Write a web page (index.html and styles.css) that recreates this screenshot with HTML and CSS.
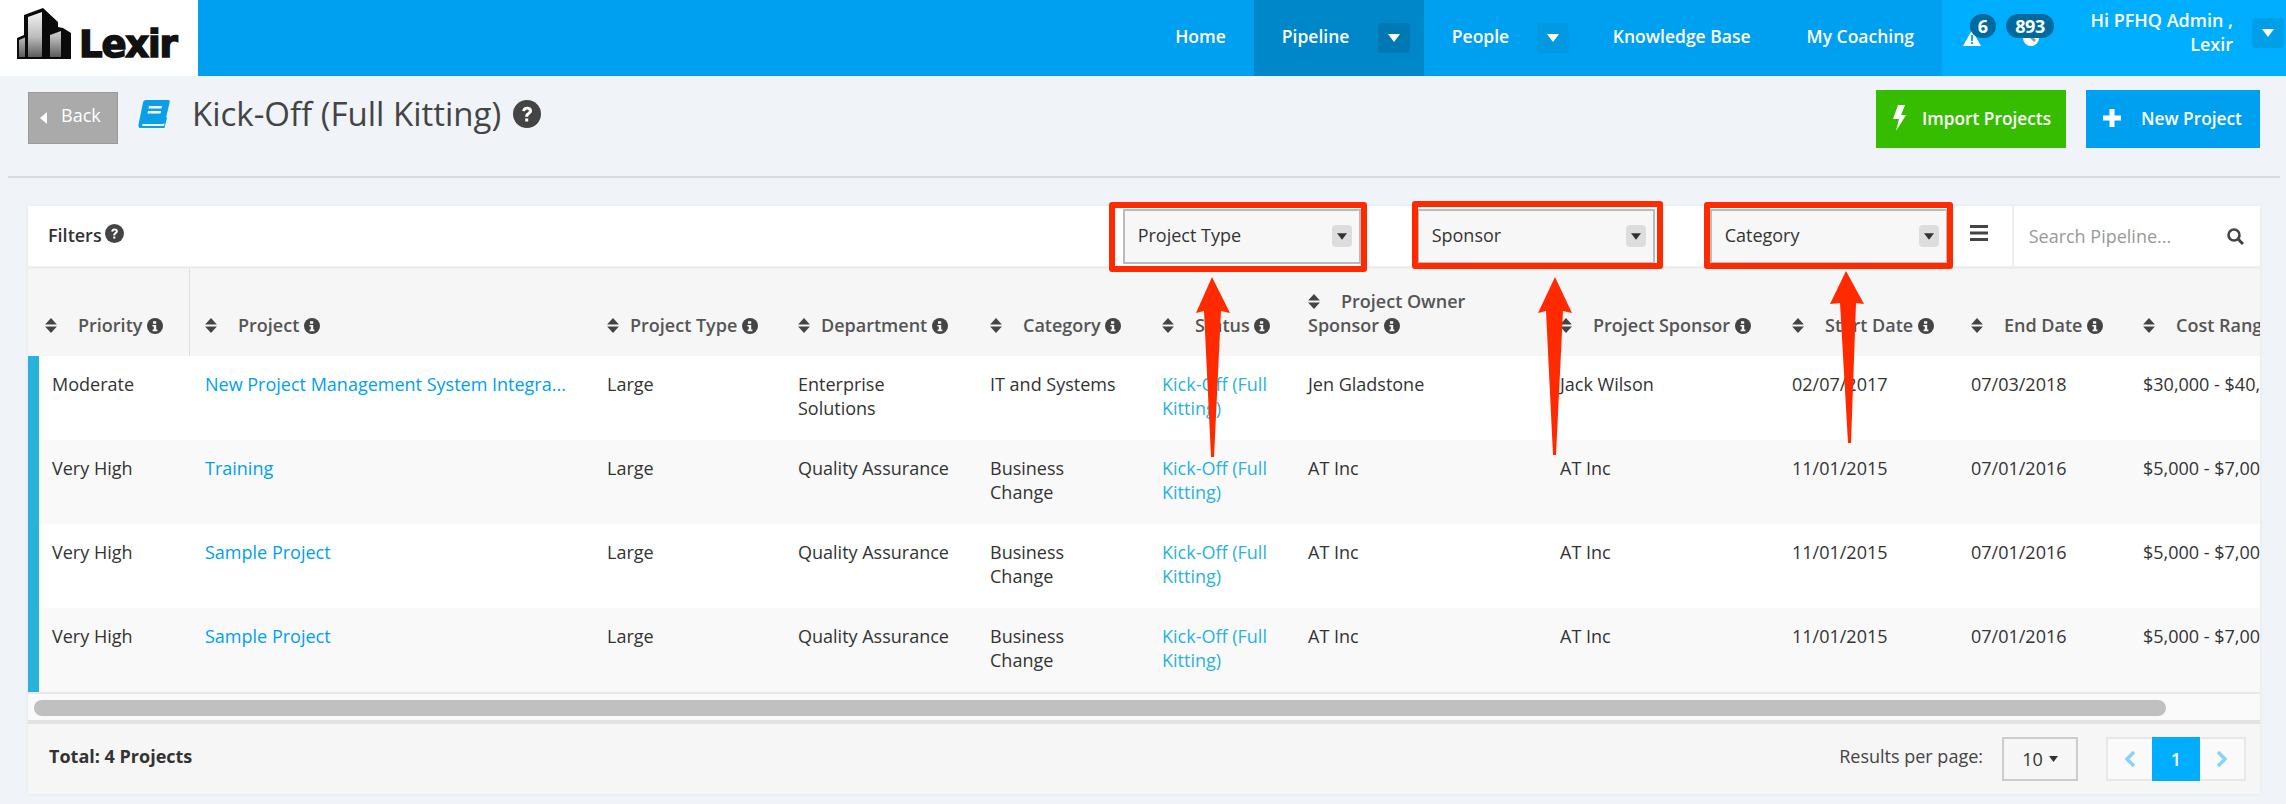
FILE: index.html
```html
<!DOCTYPE html>
<html lang="en">
<head>
<meta charset="utf-8">
<title>Kick-Off (Full Kitting)</title>
<link rel="stylesheet" href="styles.css">
</head>
<body>
<svg class="defs" width="0" height="0" aria-hidden="true">
  <symbol id="i-info" viewBox="0 0 16 16"><circle cx="8" cy="8" r="8" fill="currentColor"/><path d="M6 3.200h3.200v2.600H6zM5.400 7h3.800v4.600h1.200v1.600H5.600v-1.600h1.200V8.600H5.400z" fill="#f6f6f6"/></symbol>
  <symbol id="i-help" viewBox="0 0 28 28"><circle cx="14" cy="14" r="14" fill="currentColor"/><path d="M9.200 11c.2-2.800 2.300-4.300 5-4.300 2.800 0 4.800 1.600 4.800 4 0 3.400-3.800 3.400-3.800 6.100h-3c-.1-4 3.700-4 3.700-6 0-.8-.7-1.400-1.800-1.400-1.200 0-1.900.7-2.100 1.900z" fill="#fff"/><rect x="12.200" y="18.500" width="3" height="3" fill="#fff"/></symbol>
  <symbol id="i-sort" viewBox="0 0 11 14"><path d="M5.500 0l5.500 6H0zM5.500 14L0 8h11z" fill="currentColor"/></symbol>
  <symbol id="i-down" viewBox="0 0 12 8"><path d="M0 0h12L6 8z" fill="currentColor"/></symbol>
</svg>

<nav class="topbar">
  <a class="logo">
    <svg class="logo-mark" viewBox="0 0 60 56" width="60" height="56" aria-hidden="true">
      <defs><linearGradient id="glass" x1="0" y1="0" x2="0" y2="1"><stop offset="0" stop-color="#f2f2f2"/><stop offset=".55" stop-color="#bdbdbd"/><stop offset="1" stop-color="#5c5c5c"/></linearGradient></defs>
      <path d="M1 54V33l7-3V10L27 3l15 14v5l5 1 8 5v26z" fill="#0a0a0a"/>
      <path d="M3 52V35l6-2.500V52zM12 52V12l14-5v45zM34 52V30l11-4v26z" fill="url(#glass)"/>
    </svg>
    <span class="logo-word">Lexir</span>
  </a>
  <div class="nav-main">
    <a class="nav-item">Home</a>
    <a class="nav-item nav-item--active">Pipeline<span class="nav-caret nav-caret--dark"><svg width="12" height="8"><use href="#i-down"/></svg></span></a>
    <a class="nav-item nav-item--people">People<span class="nav-caret"><svg width="12" height="8"><use href="#i-down"/></svg></span></a>
    <a class="nav-item">Knowledge Base</a>
    <a class="nav-item">My Coaching</a>
  </div>
  <div class="nav-user">
    <span class="alert alert--warn">
      <svg width="18" height="16" viewBox="0 0 18 16" aria-hidden="true"><path d="M9 0l9 16H0z" fill="#fff"/><path d="M8 5h2v6H8zM8 12h2v2H8z" fill="#00aeff"/></svg>
      <b class="badge badge--one">6</b>
    </span>
    <span class="alert alert--count">
      <svg width="16" height="16" viewBox="0 0 16 16" aria-hidden="true"><circle cx="8" cy="8" r="8" fill="#fff"/><path d="M3 2l9 9" stroke="#999" stroke-width="3"/></svg>
      <b class="badge badge--many">893</b>
    </span>
    <span class="user-name">Hi PFHQ Admin ,<br>Lexir</span>
    <span class="nav-caret nav-caret--user"><svg width="12" height="8"><use href="#i-down"/></svg></span>
  </div>
</nav>

<main class="page">
  <header class="page-head">
    <a class="btn-back"><svg width="7" height="12" viewBox="0 0 7 12" aria-hidden="true"><path d="M7 0v12L0 6z" fill="#fff"/></svg><span class="btn-back-text">Back</span></a>
    <svg class="book" width="32" height="28" viewBox="0 0 32 28" aria-hidden="true"><path d="M8 0h22c1.500 0 2 1 1.700 2.200L27 22c-.3 1.300-1 2-2.500 2H6c-1.500 0-2 .6-2 1s.5 1 2 1h20l2-9 1 1-2.400 9.500c-.2.900-.7 1.500-1.800 1.500H5c-3 0-5-1.600-4.500-4.500L5 2.500C5.400 1 6.500 0 8 0z" fill="#0a9fe8"/><path d="M11 6h13l-.5 2.500h-13zM10 11h13l-.5 2.500h-13z" fill="#fff"/></svg>
    <h1 class="page-title">Kick-Off (Full Kitting)</h1>
    <svg class="title-help" width="28" height="28"><use href="#i-help"/></svg>
    <div class="head-actions">
      <a class="btn btn--green"><svg width="14" height="26" viewBox="0 0 14 26" aria-hidden="true"><path d="M6 0h7L9 10h5L4 26l3-12H1z" fill="#fff"/></svg>Import Projects</a>
      <a class="btn btn--blue"><svg width="18" height="18" viewBox="0 0 18 18" aria-hidden="true"><path d="M6.500 0h5v6.500H18v5h-6.500V18h-5v-6.500H0v-5h6.500z" fill="#fff"/></svg>New Project</a>
    </div>
  </header>
  <hr class="rule">

  <section class="card">
    <div class="filters">
      <span class="filters-label">Filters</span>
      <svg class="filters-help" width="19" height="19"><use href="#i-help"/></svg>
      <div class="select"><span class="select-text">Project Type</span><i class="select-caret"><svg width="10" height="7"><use href="#i-down"/></svg></i></div>
      <div class="select select--sponsor"><span class="select-text">Sponsor</span><i class="select-caret"><svg width="10" height="7"><use href="#i-down"/></svg></i></div>
      <div class="select select--category"><span class="select-text">Category</span><i class="select-caret"><svg width="10" height="7"><use href="#i-down"/></svg></i></div>
      <svg class="menu-icon" width="18" height="16" viewBox="0 0 18 16" aria-hidden="true"><path d="M0 0h18v3H0zM0 6.500h18v3H0zM0 13h18v3H0z" fill="#444"/></svg>
      <div class="search"><span class="search-text">Search Pipeline...</span>
        <svg width="17" height="17" viewBox="0 0 17 17" aria-hidden="true"><circle cx="7" cy="7" r="5.500" fill="none" stroke="#444" stroke-width="2.600"/><path d="M11 11l5 5" stroke="#444" stroke-width="3"/></svg>
      </div>
    </div>

    <div class="table-wrap">
      <table class="grid">
        <colgroup>
          <col class="c-priority"><col class="c-project"><col class="c-type"><col class="c-dept"><col class="c-cat"><col class="c-status"><col class="c-owner"><col class="c-sponsor"><col class="c-start"><col class="c-end"><col class="c-cost">
        </colgroup>
        <thead>
          <tr>
            <th class="th-first"><svg class="sort"><use href="#i-sort"/></svg>Priority <svg class="info"><use href="#i-info"/></svg></th>
            <th><svg class="sort"><use href="#i-sort"/></svg>Project <svg class="info"><use href="#i-info"/></svg></th>
            <th><svg class="sort sort--tight"><use href="#i-sort"/></svg>Project Type <svg class="info"><use href="#i-info"/></svg></th>
            <th><svg class="sort sort--tight"><use href="#i-sort"/></svg>Department <svg class="info"><use href="#i-info"/></svg></th>
            <th><svg class="sort"><use href="#i-sort"/></svg>Category <svg class="info"><use href="#i-info"/></svg></th>
            <th><svg class="sort"><use href="#i-sort"/></svg>Status <svg class="info"><use href="#i-info"/></svg></th>
            <th class="th-wrap"><svg class="sort"><use href="#i-sort"/></svg>Project Owner<br>Sponsor <svg class="info"><use href="#i-info"/></svg></th>
            <th><svg class="sort"><use href="#i-sort"/></svg>Project Sponsor <svg class="info"><use href="#i-info"/></svg></th>
            <th><svg class="sort"><use href="#i-sort"/></svg>Start Date <svg class="info"><use href="#i-info"/></svg></th>
            <th><svg class="sort"><use href="#i-sort"/></svg>End Date <svg class="info"><use href="#i-info"/></svg></th>
            <th><svg class="sort"><use href="#i-sort"/></svg>Cost Range <svg class="info"><use href="#i-info"/></svg></th>
          </tr>
        </thead>
        <tbody>
          <tr>
            <td class="td-first">Moderate</td><td><a class="link">New Project Management System Integra...</a></td><td>Large</td><td>Enterprise<br>Solutions</td><td>IT and Systems</td><td><a class="status">Kick-Off (Full<br>Kitting)</a></td><td>Jen Gladstone</td><td>Jack Wilson</td><td>02/07/2017</td><td>07/03/2018</td><td>$30,000 - $40,000</td>
          </tr>
          <tr>
            <td class="td-first">Very High</td><td><a class="link">Training</a></td><td>Large</td><td>Quality Assurance</td><td>Business<br>Change</td><td><a class="status">Kick-Off (Full<br>Kitting)</a></td><td>AT Inc</td><td>AT Inc</td><td>11/01/2015</td><td>07/01/2016</td><td>$5,000 - $7,000</td>
          </tr>
          <tr>
            <td class="td-first">Very High</td><td><a class="link">Sample Project</a></td><td>Large</td><td>Quality Assurance</td><td>Business<br>Change</td><td><a class="status">Kick-Off (Full<br>Kitting)</a></td><td>AT Inc</td><td>AT Inc</td><td>11/01/2015</td><td>07/01/2016</td><td>$5,000 - $7,000</td>
          </tr>
          <tr>
            <td class="td-first">Very High</td><td><a class="link">Sample Project</a></td><td>Large</td><td>Quality Assurance</td><td>Business<br>Change</td><td><a class="status">Kick-Off (Full<br>Kitting)</a></td><td>AT Inc</td><td>AT Inc</td><td>11/01/2015</td><td>07/01/2016</td><td>$5,000 - $7,000</td>
          </tr>
        </tbody>
      </table>
    </div>

    <div class="scroll-track"><div class="scroll-thumb"></div></div>

    <footer class="card-foot">
      <strong class="total">Total: 4 Projects</strong>
      <span class="per-page">Results per page:</span>
      <div class="per-select">10<svg width="9" height="6"><use href="#i-down"/></svg></div>
      <div class="pager">
        <span class="pager-arrow"><svg width="12" height="18" viewBox="0 0 12 18" aria-hidden="true"><path d="M10 2L3 9l7 7" fill="none" stroke="#84d5fb" stroke-width="3.500"/></svg></span>
        <span class="pager-num">1</span>
        <span class="pager-arrow"><svg width="12" height="18" viewBox="0 0 12 18" aria-hidden="true"><path d="M2 2l7 7-7 7" fill="none" stroke="#84d5fb" stroke-width="3.500"/></svg></span>
      </div>
    </footer>
  </section>
</main>

<svg class="annotations" width="2286" height="804" viewBox="0 0 2286 804" aria-hidden="true">
  <g fill="none" stroke="#ff2a00" stroke-width="6" stroke-linejoin="round">
    <rect x="1112" y="205" width="252" height="64"/>
    <rect x="1415" y="204" width="245" height="62"/>
    <rect x="1707" y="205" width="243" height="61"/>
  </g>
  <g fill="#ff2a00">
    <path d="M1212 277l18 36-9-2-7 146h-3l-7-146-8 2z"/>
    <path d="M1555 277l17 36-9-2-7 144h-3l-7-144-8 2z"/>
    <path d="M1846 271l18 33-8-1-5 140h-3l-8-140-10 1z"/>
  </g>
</svg>
</body>
</html>
```

FILE: styles.css
```css
* { box-sizing: border-box; }
html, body { margin: 0; padding: 0; overflow: hidden; }
body {
  position: relative;
  width: 2286px;
  height: 804px;
  background: #f0f4f8;
  color: #444;
  font-family: "Open Sans", "Liberation Sans", sans-serif;
  font-size: 18px;
}
.defs { position: absolute; }
a { color: inherit; text-decoration: none; }

/* top bar */
.topbar { display: flex; height: 76px; background: #00a0f0; color: #fff; }
.logo { display: flex; align-items: flex-end; width: 198px; padding: 0 0 16px 16px; background: #fff; color: #111; }
.logo-mark { margin-bottom: -1px; }
.logo-word {
  margin-left: 3px;
  font-family: "DejaVu Sans", sans-serif;
  font-weight: 700;
  font-size: 37px;
  line-height: 30px;
  letter-spacing: -1.2px;
  -webkit-text-stroke: 1.5px #111;
}
.nav-main { display: flex; justify-content: flex-end; flex: 1; }
.nav-item { display: flex; align-items: center; padding: 0 28px 4px; font-weight: 600; font-size: 17.5px; }
.nav-item--active { width: 170px; background: #0087c9; padding-right: 14px; }
.nav-item--people { width: 161px; padding-right: 16px; }
.nav-caret {
  display: flex; align-items: center; justify-content: center;
  width: 32px; height: 30px; margin-left: auto; margin-top: 4px;
  background: #0398e2; border-radius: 4px; color: #fff;
}
.nav-caret--dark { background: #0078b4; }
.nav-user { position: relative; display: flex; width: 344px; height: 76px; padding: 18px 2px 0 21px; background: #00aeff; }
.alert { position: relative; display: block; height: 16px; margin-top: 9px; }
.alert--warn { width: 18px; }
.alert--count { width: 16px; margin-left: 42px; }
.badge {
  position: absolute; top: -13px; height: 24px; border-radius: 12px;
  background: #006a9e; color: #fff; font-size: 18px; font-weight: 700; line-height: 24px; text-align: center;
}
.badge--one { left: 7px; width: 26px; }
.badge--many { left: -17px; width: 48px; letter-spacing: -.4px; }
.user-name {
  flex: 1; margin-top: -10px;
  font-weight: 600; font-size: 18px; line-height: 24px; text-align: right;
}
.nav-caret--user { flex: none; width: 32px; margin: 0 0 0 19px; background: #009fe8; }

/* page heading */
.page { padding: 0 26px 0 28px; }
.page-head { display: flex; height: 100px; padding-top: 14px; }
.btn-back {
  display: flex; align-items: center; gap: 14px;
  width: 90px; height: 52px; margin-top: 2px; padding-left: 11px;
  background: #aaa; border: 1px solid #9a9a9a; color: #fff;
}
.btn-back-text { margin-top: -7px; }
.book { margin: 10px 0 0 20px; }
.page-title { margin: 0 12px 0 22px; font-size: 33px; font-weight: 400; line-height: 48px; color: #444; }
.title-help { margin-top: 10px; color: #444; }
.head-actions { display: flex; gap: 20px; margin-left: auto; }
.btn { display: flex; align-items: center; height: 58px; padding-bottom: 2px; color: #fff; font-weight: 600; font-size: 17.3px; }
.btn--green { width: 190px; gap: 16px; padding-left: 16px; background: #36bd00; }
.btn--blue { width: 174px; gap: 20px; padding-left: 17px; background: #00a0f0; }
.rule { height: 2px; margin: 0 -20px 28px; border: 0; background: #d5dde5; }

/* card */
.card { width: 2232px; background: #fff; box-shadow: 0 0 4px rgba(0, 0, 0, .06); }
.filters { display: flex; align-items: center; height: 63px; border-bottom: 3px solid #eee; padding-left: 20px; }
.filters-label { margin-top: -3px; font-weight: 600; color: #333; }
.filters-help { margin: -5px 999px 0 3px; color: #444; }
.select {
  display: flex; align-items: center; justify-content: space-between;
  width: 238px; height: 55px; padding: 0 7px 0 13px;
  background: #f7f7f7; border: 2px solid #bbb; color: #333;
}
.select-text { margin-top: -3px; }
.select--sponsor { margin-left: 56px; }
.select--category { margin-left: 55px; }
.select-caret {
  display: flex; align-items: center; justify-content: center;
  width: 20px; height: 22px; background: #ddd; border-radius: 4px; color: #333;
}
.menu-icon { margin: -6px 0 0 22px; }
.search {
  display: flex; align-items: center; justify-content: space-between;
  width: 245px; height: 60px; margin-left: 24px; padding: 0 13px 0 15px;
  border-left: 2px solid #eee; color: #999;
}

/* table */
.table-wrap { overflow: hidden; background: #f6f6f6; }
.grid { table-layout: fixed; width: 2400px; border-collapse: separate; border-spacing: 0; color: #333; font-size: 18px; }
.c-priority { width: 162px; }
.c-project { width: 402px; }
.c-type { width: 191px; }
.c-dept { width: 192px; }
.c-cat { width: 172px; }
.c-status { width: 146px; }
.c-owner { width: 252px; }
.c-sponsor { width: 232px; }
.c-start { width: 179px; }
.c-end { width: 172px; }
.c-cost { width: 300px; }
.grid th {
  height: 87px; padding: 0 0 19px 15px;
  vertical-align: bottom; text-align: left; white-space: nowrap;
  background: #f6f6f6; color: #555;
  font-size: 18px; font-weight: 600; line-height: 24px;
}
.grid .th-first { padding-left: 17px; border-right: 1px solid #ddd; }
.sort { width: 12px; height: 15px; margin-right: 21px; vertical-align: -1px; color: #444; }
.sort--tight { margin-right: 11px; }
.info { width: 16px; height: 16px; vertical-align: -2px; color: #444; }
.grid td {
  height: 84px; padding: 16px 10px 0 15px;
  vertical-align: top; white-space: nowrap;
  background: #f9f9f9; line-height: 24px;
}
.grid tbody tr:nth-child(odd) td { background: #fff; }
.grid .td-first { padding-left: 13px; border-left: 11px solid #29b3dc; }
.link { color: #00a0f0; }
.status { color: #29b3dc; }

/* scrollbar and footer */
.scroll-track { height: 32px; padding: 6px 0 0 6px; background: #fafafa; border-top: 2px solid #e8e8e8; border-bottom: 4px solid #e2e2e2; }
.scroll-thumb { width: 2132px; height: 16px; border-radius: 8px; background: #c0c0c0; }
.card-foot { display: flex; align-items: center; height: 70px; padding: 0 14px 0 21px; background: #f6f6f6; }
.total { flex: 1; margin-top: -7px; font-weight: 700; color: #333; }
.per-page { margin-top: -6px; color: #444; }
.per-select {
  display: flex; align-items: center; justify-content: center; gap: 6px;
  width: 76px; height: 44px; margin-left: 19px;
  border: 2px solid #ccc; color: #333;
}
.pager { display: flex; height: 44px; margin-left: 28px; border: 2px solid #e8e8e8; background: #fafafa; }
.pager-arrow { display: flex; align-items: center; justify-content: center; width: 44px; }
.pager-num { width: 48px; margin: -2px 0; background: #00aeff; color: #fff; font-weight: 600; line-height: 44px; text-align: center; }

/* callouts laid over the screenshot */
.annotations { position: absolute; top: 0; left: 0; pointer-events: none; }
```
